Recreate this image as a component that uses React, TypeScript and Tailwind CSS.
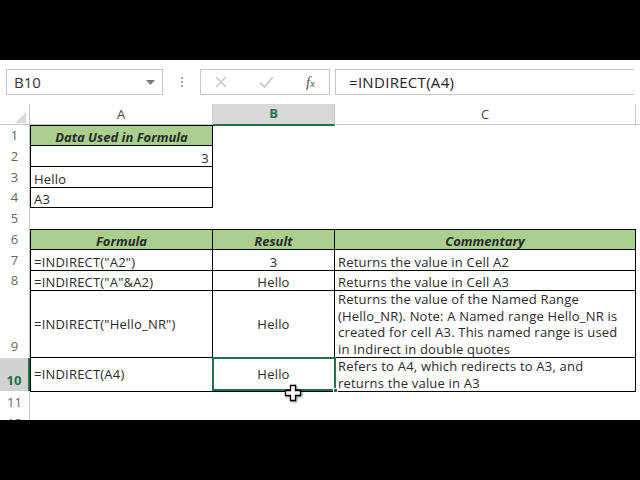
import React from 'react';

const font = { fontFamily: '"Open Sans", "Liberation Sans", sans-serif' };

const cols = 'grid grid-cols-[30px_183px_122px_301px_1fr] shrink-0';

function RowNum({ n, h, active }: { n: number; h: string; active?: boolean }) {
  return (
    <div
      className={`${h} flex items-end justify-center pb-[1px] text-[13px] ${
        active
          ? 'bg-[#d2d2d2] text-[#217346] font-bold border-r-2 border-[#217346]'
          : 'text-[#666] border-r border-[#c6c6c6]'
      }`}
    >
      {n}
    </div>
  );
}

function FormulaBar() {
  return (
    <div className="h-[44px] flex items-center bg-white px-[6px]">
      <div className="w-[157px] h-[26px] border border-[#c6c6c6] flex items-center justify-between px-[7px]">
        <span className="text-[15px] text-[#333]">B10</span>
        <svg width="9" height="5" viewBox="0 0 9 5">
          <path d="M0 0h9L4.5 5z" fill="#777" />
        </svg>
      </div>
      <div className="w-[37px] flex flex-col items-center gap-[2px]">
        <span className="w-[2px] h-[2px] bg-[#aaa]" />
        <span className="w-[2px] h-[2px] bg-[#aaa]" />
        <span className="w-[2px] h-[2px] bg-[#aaa]" />
      </div>
      <div className="w-[130px] h-[26px] border border-[#c6c6c6] flex items-center px-[14px] justify-between">
        <svg width="12" height="12" viewBox="0 0 12 12">
          <path d="M1 1l10 10M11 1L1 11" stroke="#c8c8c8" strokeWidth="1.6" />
        </svg>
        <svg width="15" height="12" viewBox="0 0 15 12">
          <path d="M1 6.5l4.5 4.5L14 1" stroke="#c8c8c8" strokeWidth="1.8" fill="none" />
        </svg>
        <span className="text-[15px] italic text-[#555]" style={{ fontFamily: '"Liberation Serif", serif' }}>
          f<span className="text-[11px]">x</span>
        </span>
      </div>
      <div className="ml-[5px] flex-1 h-[26px] border border-r-0 border-[#c6c6c6] flex items-center pl-[13px]">
        <span className="text-[15px] tracking-[0.3px] text-[#222]">=INDIRECT(A4)</span>
      </div>
    </div>
  );
}

function ColHeaders() {
  return (
    <div className={`${cols} h-[21px] border-b border-[#c6c6c6] text-[13px]`}>
      <div className="relative border-r border-[#c6c6c6]">
        <svg className="absolute right-[3px] bottom-[3px]" width="11" height="11" viewBox="0 0 11 11">
          <path d="M11 0v11H0z" fill="#dadada" />
        </svg>
      </div>
      <div className="flex items-center justify-center text-[#444] border-r border-[#c6c6c6]">A</div>
      <div className="flex items-center justify-center bg-[#d9d9d9] text-[#217346] font-bold border-b-2 border-[#217346] border-r border-r-[#c6c6c6]">
        B
      </div>
      <div className="flex items-center justify-center text-[#444] border-r border-[#c6c6c6]">C</div>
      <div />
    </div>
  );
}

const cell =
  'border-r border-b border-black px-[3px] text-[13px] tracking-[0.2px] text-[#2a2a2a] leading-[16.5px] whitespace-nowrap';
const head = 'bg-[#a9d08e] font-bold italic text-[#1a1a1a] tracking-[0px]';

function Grid() {
  return (
    <div className="relative">
      {/* 1 */}
      <div className={cols}>
        <RowNum n={1} h="h-[21px]" />
        <div className={`${cell} ${head} border-l border-t flex items-end justify-center`}>Data Used in Formula</div>
      </div>
      {/* 2 */}
      <div className={cols}>
        <RowNum n={2} h="h-[21px]" />
        <div className={`${cell} border-l flex items-end justify-end`}>3</div>
      </div>
      {/* 3 */}
      <div className={cols}>
        <RowNum n={3} h="h-[21px]" />
        <div className={`${cell} border-l flex items-end`}>Hello</div>
      </div>
      {/* 4 */}
      <div className={cols}>
        <RowNum n={4} h="h-[20px]" />
        <div className={`${cell} border-l flex items-end`}>A3</div>
      </div>
      {/* 5 */}
      <div className={cols}>
        <RowNum n={5} h="h-[21px]" />
      </div>
      {/* 6 */}
      <div className={cols}>
        <RowNum n={6} h="h-[21px]" />
        <div className={`${cell} ${head} border-l border-t flex items-end justify-center`}>Formula</div>
        <div className={`${cell} ${head} border-t flex items-end justify-center`}>Result</div>
        <div className={`${cell} ${head} border-t flex items-end justify-center`}>Commentary</div>
      </div>
      {/* 7 */}
      <div className={cols}>
        <RowNum n={7} h="h-[21px]" />
        <div className={`${cell} border-l flex items-end`}>=INDIRECT("A2")</div>
        <div className={`${cell} flex items-end justify-center`}>3</div>
        <div className={`${cell} flex items-end`}>Returns the value in Cell A2</div>
      </div>
      {/* 8 */}
      <div className={cols}>
        <RowNum n={8} h="h-[20px]" />
        <div className={`${cell} border-l flex items-end`}>=INDIRECT("A"&amp;A2)</div>
        <div className={`${cell} flex items-end justify-center`}>Hello</div>
        <div className={`${cell} flex items-end`}>Returns the value in Cell A3</div>
      </div>
      {/* 9 */}
      <div className={cols}>
        <RowNum n={9} h="h-[66px]" />
        <div className={`${cell} border-l flex items-center`}>=INDIRECT("Hello_NR")</div>
        <div className={`${cell} flex items-center justify-center`}>Hello</div>
        <div className={`${cell} flex items-center overflow-hidden`}>
          <div>
            Returns the value of the Named Range
            <br />
            (Hello_NR). Note: A Named range Hello_NR is
            <br />
            created for cell A3. This named range is used
            <br />
            in Indirect in double quotes
          </div>
        </div>
      </div>
      {/* 10 */}
      <div className={cols}>
        <RowNum n={10} h="h-[33px]" active />
        <div className={`${cell} border-l flex items-center`}>=INDIRECT(A4)</div>
        <div className={`${cell} flex items-center justify-center`}>Hello</div>
        <div className={`${cell} flex items-center`}>
          <div>
            Refers to A4, which redirects to A3, and
            <br />
            returns the value in A3
          </div>
        </div>
      </div>
      {/* 11 */}
      <div className={cols}>
        <RowNum n={11} h="h-[21px]" />
      </div>
      <div className={cols}>
        <RowNum n={12} h="h-[21px]" />
      </div>

      {/* selection on B10 */}
      <div className="absolute left-[212px] top-[232px] w-[124px] h-[34px] border-2 border-[#217346] pointer-events-none" />
      <div className="absolute left-[333px] top-[263px] w-[5px] h-[5px] bg-[#217346] border border-white" />

      {/* cursor */}
      <svg className="absolute left-[284px] top-[259px]" width="20" height="20" viewBox="0 0 20 20">
        <path
          d="M6.5 1.5h5v5h5v5h-5v5h-5v-5h-5v-5h5z"
          fill="white"
          stroke="black"
          strokeWidth="1.3"
          style={{ filter: 'drop-shadow(1px 1px 1px rgba(0,0,0,0.45))' }}
        />
      </svg>
    </div>
  );
}

export default function App() {
  return (
    <div className="w-[640px] h-[480px] bg-black overflow-hidden" style={font}>
      <div className="h-[60px]" />
      <div className="h-[360px] bg-white overflow-hidden">
        <FormulaBar />
        <ColHeaders />
        <Grid />
      </div>
    </div>
  );
}
